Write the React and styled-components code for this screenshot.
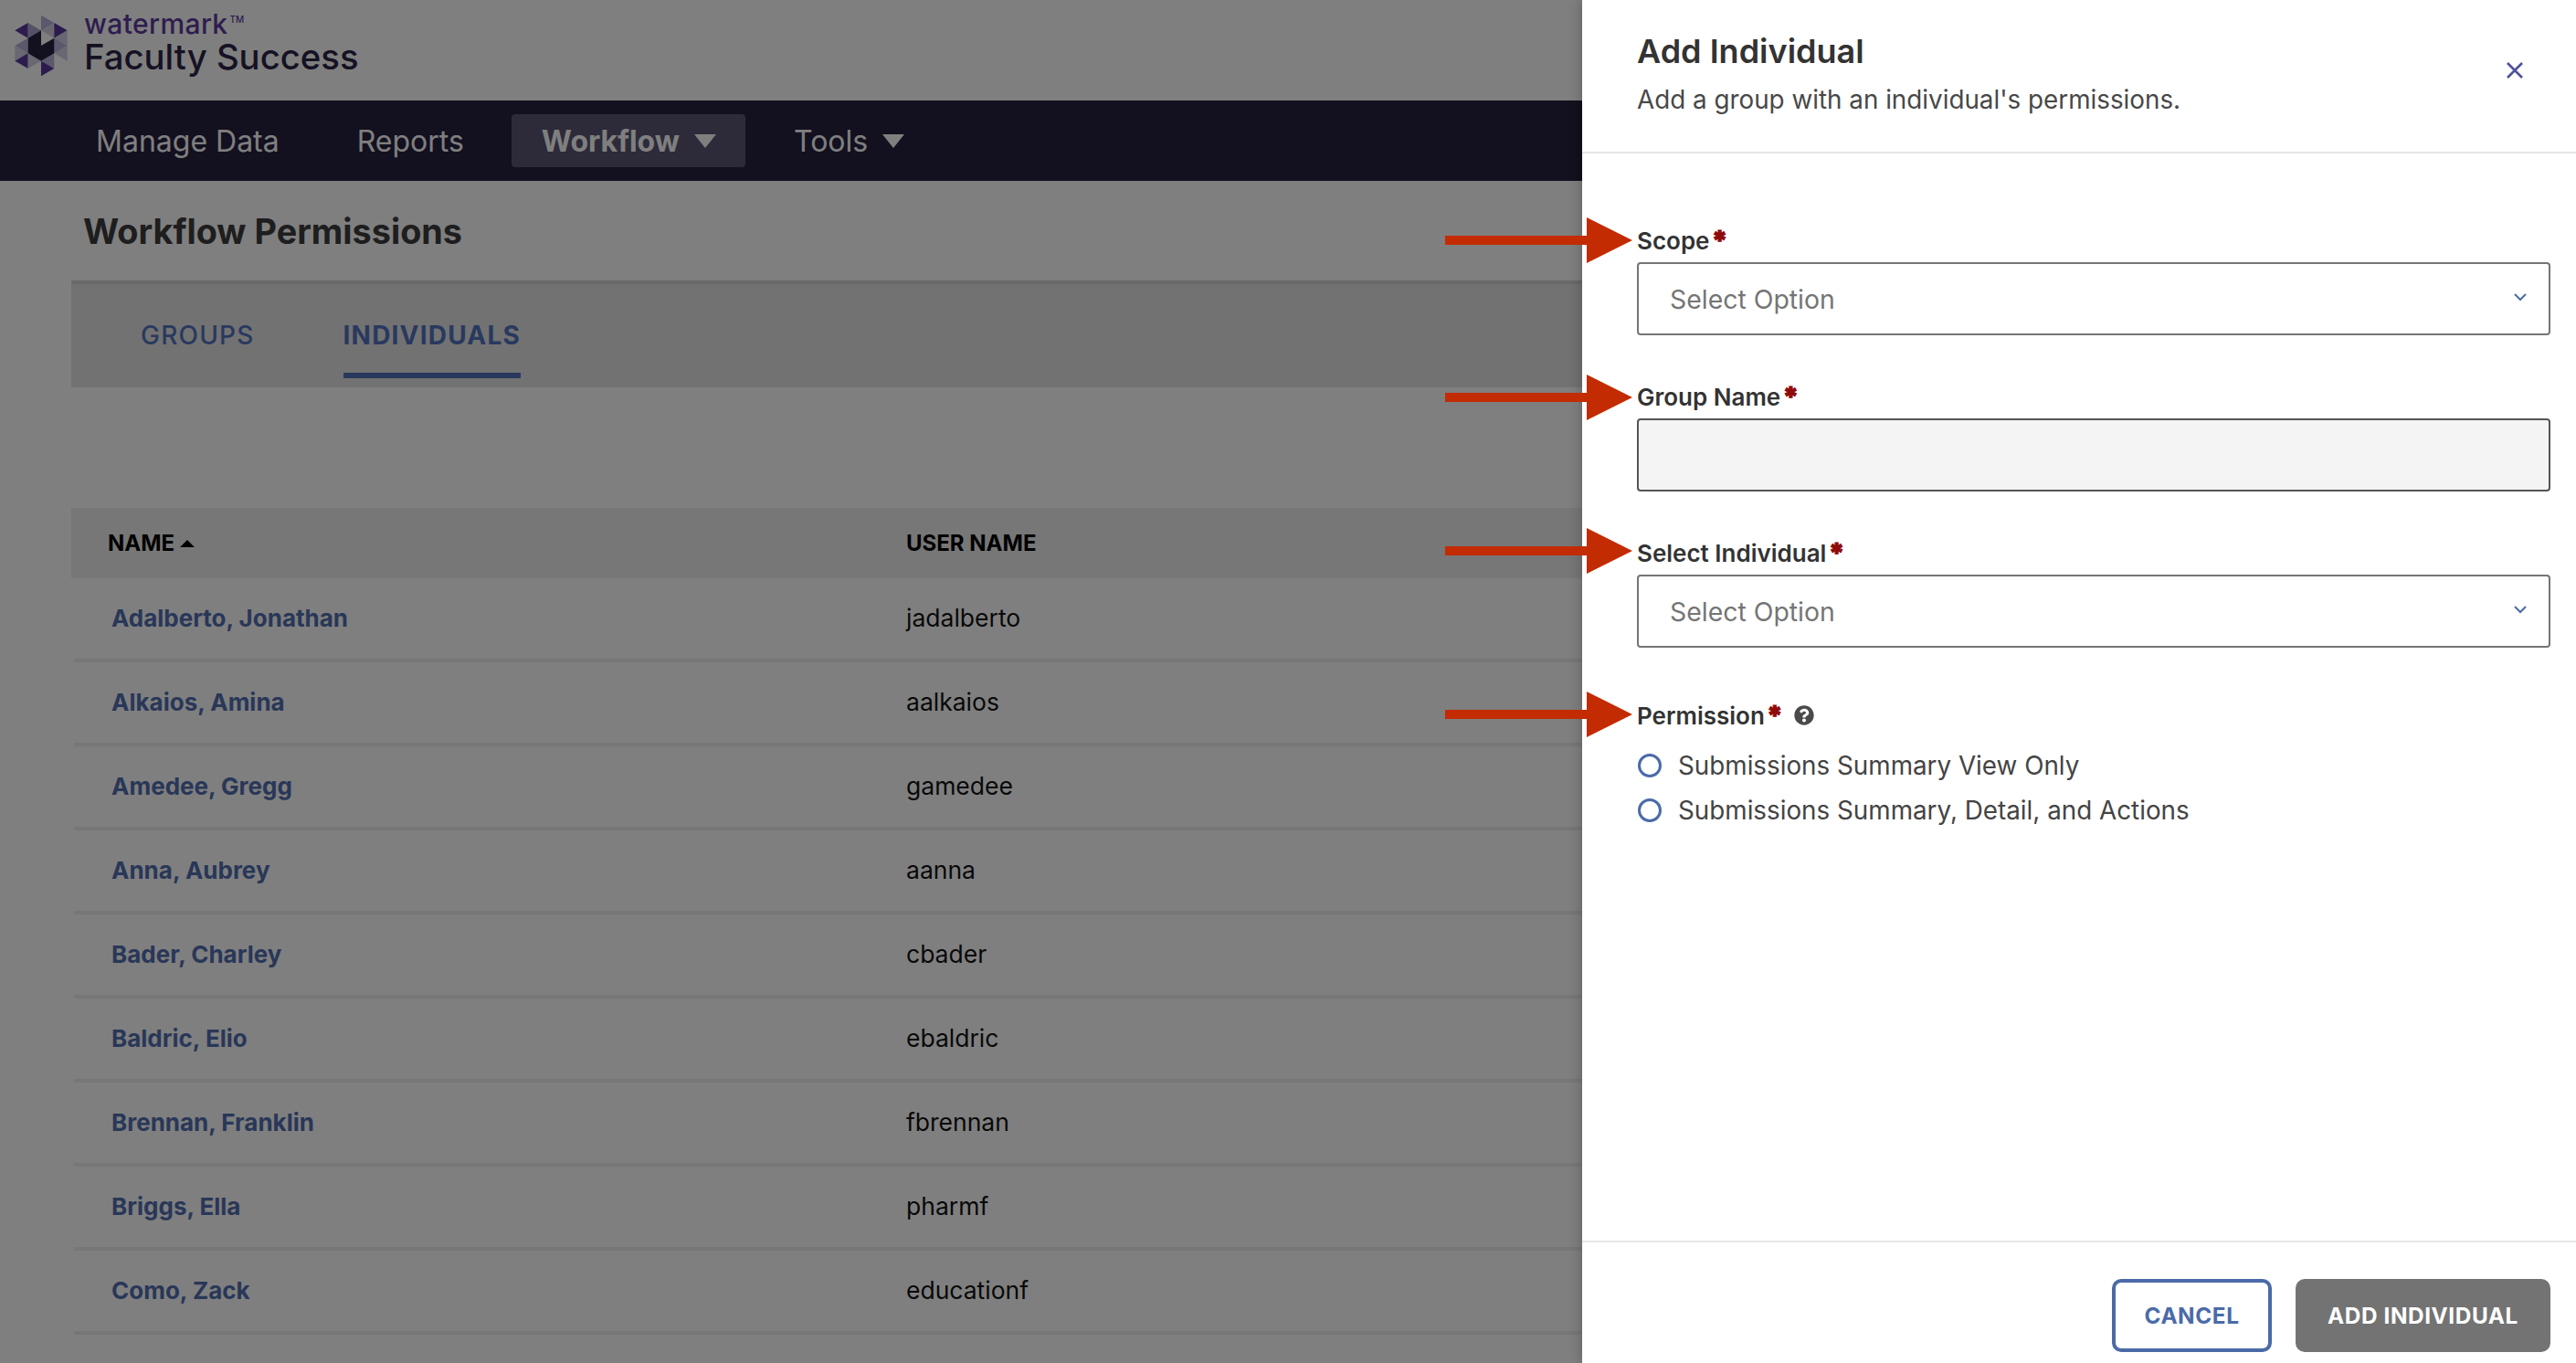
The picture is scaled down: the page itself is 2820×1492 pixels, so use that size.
import React from "react";
import styled, { createGlobalStyle } from "styled-components";
import { FaQuestionCircle } from "react-icons/fa";

const Global = createGlobalStyle`
  html, body { margin: 0; padding: 0; width: 2820px; height: 1492px; overflow: hidden; background: #fff; }
  body, button { font-family: Inter, "Liberation Sans", sans-serif; }
  * { box-sizing: border-box; }
`;

const Stage = styled.div`
  position: relative;
  width: 2820px;
  height: 1492px;
  overflow: hidden;
`;

const Page = styled.div`
  display: flex;
  flex-direction: column;
  background: #fff;
  height: 100%;
`;

const Brand = styled.header`
  display: flex;
  align-items: flex-start;
  height: 110px;
  padding: 10px 0 0 10px;
  gap: 10px;
`;

const BrandText = styled.div`
  display: flex;
  flex-direction: column;
`;

const Watermark = styled.div`
  font-size: 30px;
  line-height: 32px;
  font-weight: 500;
  letter-spacing: 0.4px;
  color: #5c3a9e;
  sup { font-size: 10px; letter-spacing: 0; vertical-align: 12px; line-height: 0; margin-left: 2px; }
`;

const Product = styled.div`
  font-size: 38.3px;
  line-height: 40px;
  font-weight: 500;
  color: #2a2446;
`;

const Nav = styled.nav`
  display: flex;
  align-items: center;
  gap: 20px;
  height: 88px;
  padding-left: 72px;
  background: #26203e;
`;

const NavItem = styled.div`
  display: flex;
  align-items: center;
  gap: 16px;
  height: 58px;
  padding: 0 32px 0 33px;
  border-radius: 4px;
  color: #fff;
  font-size: 32px;
  font-weight: ${p => (p.$active ? 700 : 400)};
  background: ${p => (p.$active ? "#5a5474" : "transparent")};
`;

const Caret = styled.span`
  width: 0;
  height: 0;
  border-left: 12px solid transparent;
  border-right: 12px solid transparent;
  border-top: 15px solid #fff;
`;

const TitleRow = styled.div`
  display: flex;
  align-items: center;
  height: 109px;
  padding-left: 91px;
`;

const PageTitle = styled.h1`
  margin: 0;
  font-size: 37.8px;
  font-weight: 700;
  color: #3c3c3c;
`;

const Tabs = styled.div`
  display: flex;
  gap: 97px;
  height: 117px;
  margin-left: 78px;
  padding-left: 76px;
  background: #e4e4e7;
  border-top: 4px solid #d2d2d2;
`;

const Tab = styled.div`
  display: flex;
  align-items: center;
  height: 103px;
  padding-top: 15px;
  font-size: 28px;
  font-weight: ${p => (p.$active ? 700 : 500)};
  letter-spacing: 1.2px;
  color: #5273bd;
  border-bottom: 6px solid ${p => (p.$active ? "#5273bd" : "transparent")};
`;

const Table = styled.div`
  margin: 132px 0 0 78px;
`;

const HeadRow = styled.div`
  display: grid;
  grid-template-columns: 874px 1fr;
  align-items: center;
  height: 77px;
  padding-left: 40px;
  background: #eee;
  font-size: 24px;
  font-weight: 700;
  color: #000;
`;

const SortMark = styled.span`
  display: inline-block;
  width: 0;
  height: 0;
  margin-left: 6px;
  vertical-align: 4px;
  border-left: 8px solid transparent;
  border-right: 8px solid transparent;
  border-bottom: 8px solid #000;
`;

const Row = styled.div`
  display: grid;
  grid-template-columns: 870px 1fr;
  align-items: center;
  height: 92px;
  margin-left: 3px;
  padding: 0 0 2px 41px;
  border-bottom: 4px solid #eee;
  font-size: 26.5px;
`;

const NameLink = styled.a`
  font-size: 26px;
  font-weight: 700;
  color: #526fb0;
`;

const UserName = styled.span`
  color: #111;
`;

const Overlay = styled.div`
  position: absolute;
  inset: 0;
  background: rgba(0, 0, 0, 0.5);
`;

const Drawer = styled.aside`
  position: absolute;
  top: 0;
  right: 0;
  bottom: 0;
  display: flex;
  flex-direction: column;
  width: 1088px;
  background: #fff;
  box-shadow: -3px 0 12px rgba(0, 0, 0, 0.18);
`;

const DrawerHead = styled.div`
  display: flex;
  justify-content: space-between;
  align-items: center;
  height: 168px;
  padding: 0 57px 4px 60px;
  border-bottom: 2px solid #e6e6e6;
`;

const DrawerTitle = styled.h2`
  margin: 0 0 10px;
  font-size: 36px;
  line-height: 46px;
  font-weight: 600;
  color: #333;
`;

const DrawerSub = styled.p`
  margin: 0;
  font-size: 27.8px;
  line-height: 40px;
  color: #484848;
`;

const CloseBtn = styled.button`
  display: flex;
  padding: 0;
  margin-bottom: 8px;
  border: 0;
  background: none;
`;

const DrawerBody = styled.div`
  flex: 1;
  padding: 78px 28px 0 60px;
`;

const Field = styled.div`
  margin-bottom: 50px;
`;

const Label = styled.div`
  display: flex;
  align-items: center;
  height: 34px;
  margin-bottom: 7px;
  font-size: 26px;
  font-weight: 600;
  color: #333;
`;

const Req = styled.span`
  align-self: flex-start;
  margin: 2px 0 0 2px;
  font-size: 30px;
  line-height: 30px;
  font-weight: 900;
  color: #8f0a0a;
  -webkit-text-stroke: 1px #8f0a0a;
`;

const SelectBox = styled.div`
  display: flex;
  justify-content: space-between;
  align-items: center;
  height: 80px;
  padding: 0 24px 0 34px;
  border: 2px solid #757575;
  border-radius: 4px;
  font-size: 28.4px;
  color: #757575;
`;

const TextBox = styled.div`
  height: 80px;
  background: #f4f4f4;
  border: 2px solid #555;
  border-radius: 4px;
`;

const PermissionLabel = styled(Label)`
  margin-top: 57px;
  margin-bottom: 13px;
`;

const Help = styled.span`
  display: flex;
  margin-left: 12px;
  color: #4a4a4a;
`;

const RadioRow = styled.label`
  display: flex;
  align-items: center;
  gap: 18px;
  height: 49px;
  padding-left: 1px;
  font-size: 27.8px;
  color: #444;
`;

const RadioDot = styled.span`
  width: 26px;
  height: 26px;
  border: 3px solid #4a6ba8;
  border-radius: 50%;
`;

const DrawerFoot = styled.div`
  display: flex;
  justify-content: flex-end;
  gap: 26px;
  height: 134px;
  padding: 40px 28px 0 0;
  border-top: 2px solid #e6e6e6;
`;

const Button = styled.button`
  height: 80px;
  width: ${p => (p.$primary ? "279px" : "175px")};
  border-radius: 10px;
  border: ${p => (p.$primary ? "0" : "4px solid #4a6ba8")};
  background: ${p => (p.$primary ? "#737373" : "#fff")};
  color: ${p => (p.$primary ? "#fff" : "#4a6ba8")};
  font-size: 24.3px;
  font-weight: 700;
  letter-spacing: 0.6px;
`;

const Arrow = styled.svg`
  position: absolute;
  left: 1582px;
  top: ${p => p.$top}px;
`;

const ChevronGlyph = styled.svg`
  margin-top: -3px;
`;

const Logo = () => (
  <svg width="72" height="80" viewBox="0 0 216 240">
    <g>
      <polygon fill="#58389c" points="19,70 62,45 62,95" />
      <polygon fill="#a9a3cf" points="62,45 105,70 62,95" />
      <polygon fill="#b3b0d8" points="105,20 148,45 105,70" />
      <polygon fill="#d2cfe2" points="148,45 105,70 148,95" />
      <polygon fill="#58389c" points="148,45 191,70 148,95" />
      <polygon fill="#d2cfe2" points="191,70 148,95 191,120" />
      <polygon fill="#b3b0d8" points="148,95 191,120 148,145" />
      <polygon fill="#d2cfe2" points="191,120 148,145 191,170" />
      <polygon fill="#b3b0d8" points="19,120 62,95 62,145" />
      <polygon fill="#d2cfe2" points="19,120 62,145 19,170" />
      <polygon fill="#58389c" points="19,170 62,145 62,195" />
      <polygon fill="#d2cfe2" points="62,145 105,170 62,195" />
      <polygon fill="#b3b0d8" points="105,170 148,145 148,195" />
      <polygon fill="#58389c" points="105,170 148,195 105,220" />
      <polygon fill="#26203e" points="62,95 105,70 105,120 148,95 148,145 105,170 62,145" />
    </g>
  </svg>
);

const Chevron = () => (
  <ChevronGlyph width="14" height="9" viewBox="0 0 14 9" fill="none" stroke="#4a6ba8" strokeWidth="2">
    <path d="M1 1l6 6 6-6" />
  </ChevronGlyph>
);

const CloseIcon = () => (
  <svg width="20" height="20" viewBox="0 0 20 20" fill="none" stroke="#4f4f9c" strokeWidth="2.6">
    <path d="M2 2l16 16M18 2L2 18" />
  </svg>
);

const RedArrow = ({ top }) => (
  <Arrow $top={top} width="206" height="50" viewBox="0 0 206 50">
    <path fill="#c32b02" d="M0 20h155V0l50 25-50 25V30H0z" />
  </Arrow>
);

const people = [
  ["Adalberto, Jonathan", "jadalberto"],
  ["Alkaios, Amina", "aalkaios"],
  ["Amedee, Gregg", "gamedee"],
  ["Anna, Aubrey", "aanna"],
  ["Bader, Charley", "cbader"],
  ["Baldric, Elio", "ebaldric"],
  ["Brennan, Franklin", "fbrennan"],
  ["Briggs, Ella", "pharmf"],
  ["Como, Zack", "educationf"],
];

export default function App() {
  return (
    <Stage>
      <Global />
      <Page>
        <Brand>
          <Logo />
          <BrandText>
            <Watermark>watermark<sup>TM</sup></Watermark>
            <Product>Faculty Success</Product>
          </BrandText>
        </Brand>
        <Nav>
          <NavItem>Manage Data</NavItem>
          <NavItem>Reports</NavItem>
          <NavItem $active>Workflow <Caret /></NavItem>
          <NavItem>Tools <Caret /></NavItem>
        </Nav>
        <TitleRow><PageTitle>Workflow Permissions</PageTitle></TitleRow>
        <Tabs>
          <Tab>GROUPS</Tab>
          <Tab $active>INDIVIDUALS</Tab>
        </Tabs>
        <Table>
          <HeadRow>
            <span>NAME<SortMark /></span>
            <span>USER NAME</span>
          </HeadRow>
          {people.map(([name, user]) => (
            <Row key={user}>
              <NameLink>{name}</NameLink>
              <UserName>{user}</UserName>
            </Row>
          ))}
        </Table>
      </Page>
      <Overlay />
      <Drawer>
        <DrawerHead>
          <div>
            <DrawerTitle>Add Individual</DrawerTitle>
            <DrawerSub>Add a group with an individual's permissions.</DrawerSub>
          </div>
          <CloseBtn><CloseIcon /></CloseBtn>
        </DrawerHead>
        <DrawerBody>
          <Field>
            <Label>Scope<Req>*</Req></Label>
            <SelectBox>Select Option<Chevron /></SelectBox>
          </Field>
          <Field>
            <Label>Group Name<Req>*</Req></Label>
            <TextBox />
          </Field>
          <Field>
            <Label>Select Individual<Req>*</Req></Label>
            <SelectBox>Select Option<Chevron /></SelectBox>
          </Field>
          <PermissionLabel>
            Permission<Req>*</Req>
            <Help><FaQuestionCircle size={22} /></Help>
          </PermissionLabel>
          <RadioRow><RadioDot />Submissions Summary View Only</RadioRow>
          <RadioRow><RadioDot />Submissions Summary, Detail, and Actions</RadioRow>
        </DrawerBody>
        <DrawerFoot>
          <Button>CANCEL</Button>
          <Button $primary>ADD INDIVIDUAL</Button>
        </DrawerFoot>
      </Drawer>
      <RedArrow top={238} />
      <RedArrow top={410} />
      <RedArrow top={578} />
      <RedArrow top={757} />
    </Stage>
  );
}
